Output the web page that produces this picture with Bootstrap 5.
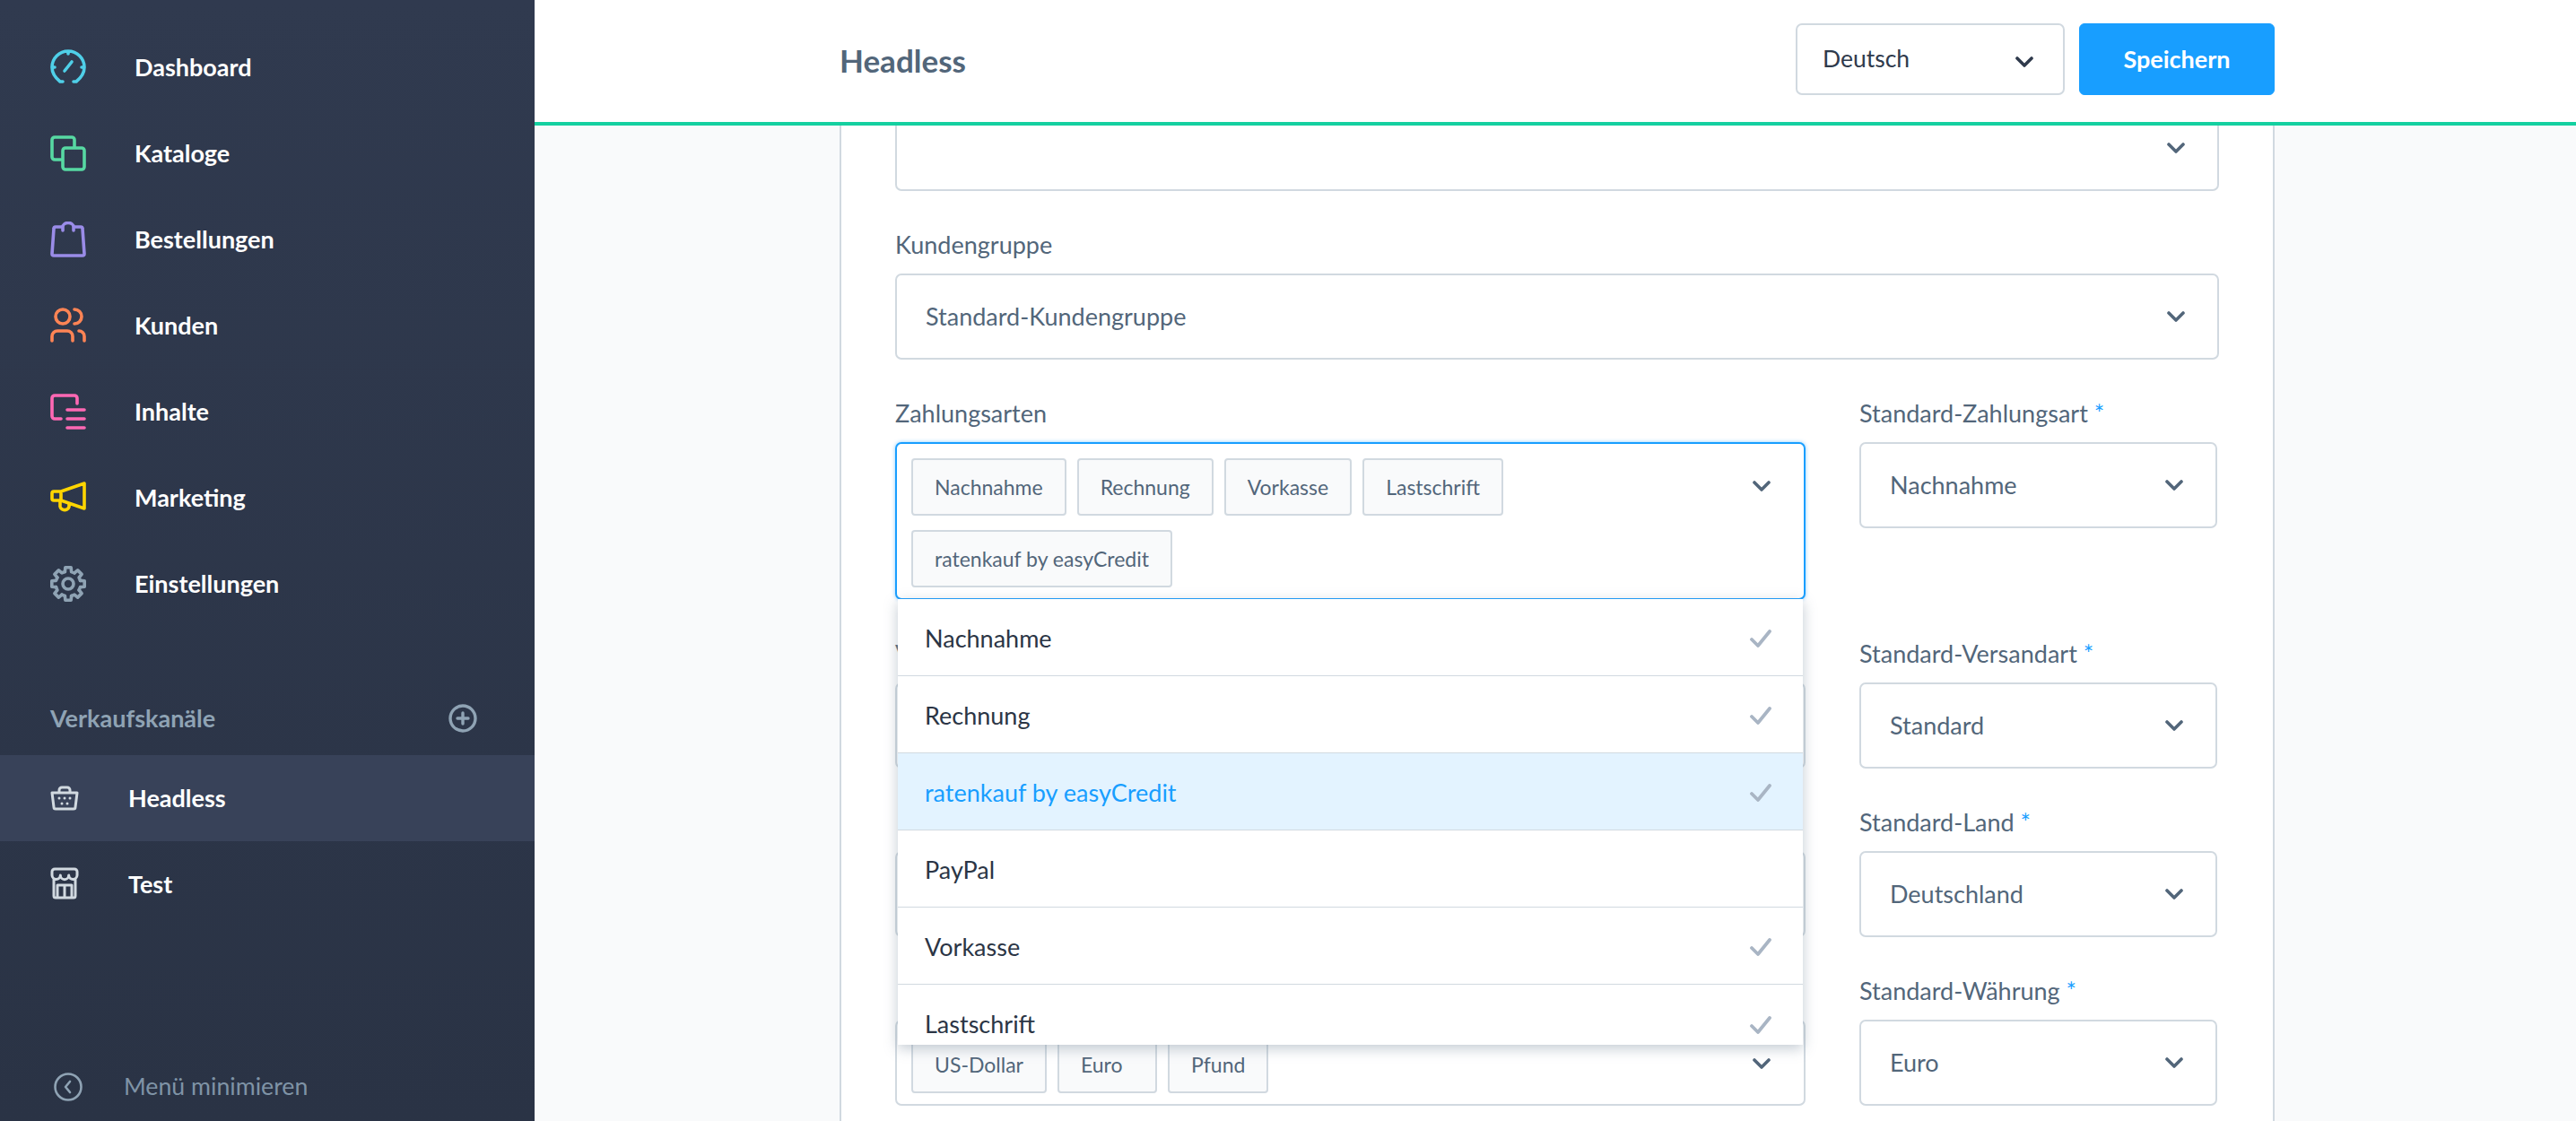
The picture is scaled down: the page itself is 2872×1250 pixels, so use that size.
<!DOCTYPE html>
<html lang="de">
<head>
<meta charset="utf-8">
<title>Headless</title>
<link href="https://cdn.jsdelivr.net/npm/bootstrap@5.3.0/dist/css/bootstrap.min.css" rel="stylesheet">
<style>
html,body{height:100%;}
body{font-family:Lato,"Noto Sans",sans-serif;font-size:28px;background:#f9fafb;color:#52667a;overflow:hidden;}
.app-shell{height:1250px;}
.side-bar{width:596px;flex:0 0 596px;height:1250px;background:linear-gradient(180deg,#303a4f,#2a3345);padding-top:27px;}
.side-link{height:96px;padding:0 0 0 56px;gap:54px;color:#fff;font-weight:700;font-size:27px;}
.side-link:hover,.side-link:focus{color:#fff;}
.side-link svg{flex:0 0 40px;width:40px;height:40px;fill:none;stroke-width:3.6;stroke-linecap:round;stroke-linejoin:round;}
.side-head{margin:82px 64px 21px 56px;height:40px;color:#8fa3b4;font-weight:700;font-size:27px;}
.side-head svg{width:32px;height:32px;fill:none;stroke:#8fa3b4;stroke-width:3.4;stroke-linecap:round;}
.chan-link{gap:55px;}
.chan-link svg{flex:0 0 32px;width:32px;height:40px;stroke:#d1d9e0;stroke-width:3;}
.chan-on{background:#384259;}
.side-foot{padding:0 0 7px 60px;gap:46px;color:#7f93a6;font-size:26.7px;height:70px;}
.side-foot svg{width:32px;height:32px;fill:none;stroke:#8fa3b4;stroke-width:2.6;stroke-linecap:round;stroke-linejoin:round;}
.main-area{min-width:0;}
.top-bar{height:140px;background:#fff;border-bottom:4px solid #14d0a0;position:relative;z-index:10;}
.page-wrap{width:1600px;margin-left:340px;}
.top-row{height:136px;padding-top:26px;}
.top-title{font-size:35px;font-weight:700;color:#52667a;margin:-28px 0 0;}
.lang-pick{width:300px;height:80px;padding:0 33px 0 28px;color:#2f3a4c;font-size:26.5px;border:2px solid #d1d9e0;border-radius:7px;}
.save-btn{width:218px;height:80px;background:#189eff;border-color:#189eff;font-size:27px;font-weight:700;border-radius:6px;}
.scroll-view{height:1110px;overflow:hidden;}
.form-panel{margin-top:-23px;padding:0 60px;background:#fff;border-left:2px solid #d1d9e0;border-right:2px solid #d1d9e0;}
.field-block{margin-bottom:40px;}
.field-gap{margin-bottom:120px;}
.field-label{display:block;font-size:27px;line-height:40px;margin-bottom:12px;color:#52667a;}
.label-under{padding-left:4px;}
.req-mark{color:#189eff;}
.pick-box{height:96px;border:2px solid #d1d9e0;border-radius:7px;background:#fff;padding:0 36px 0 32px;font-size:27px;color:#52667a;}
.pick-box svg,.lang-pick svg{flex:0 0 auto;width:20px;height:12px;fill:none;stroke:#52667a;stroke-width:3.6;stroke-linecap:round;stroke-linejoin:round;}
.lang-pick svg{stroke:#2f3a4c;margin-top:6px;}
.multi-box{height:auto;padding:16px 37px 14px 16px;align-items:flex-start!important;}
.multi-box svg{margin-top:25px;}
.multi-focus{height:176px;border-color:#189eff;box-shadow:0 0 4px rgba(24,158,255,.5);}
.multi-low{height:96px;}
.chip-list{max-width:900px;gap:16px 12px;}
.pay-chip{height:64px;min-width:111px;padding:0 24px;border:2px solid #d1d9e0;border-radius:4px;background:#f9fafb;font-size:23px;color:#52667a;}
.left-col{width:1015px;flex:0 0 1015px;}
.right-col{width:399px;flex:0 0 399px;}
.col-gap{gap:60px;}
.pick-menu{position:absolute;left:3px;right:3px;top:175px;height:497px;overflow:hidden;z-index:5;background:#fff;box-shadow:0 4px 14px rgba(120,138,155,.45);}
.menu-row{height:86px;padding:3px 34px 0 30px;border:0;border-bottom:2px solid #d1d9e0;font-size:27px;color:#2b3545;border-radius:0!important;}
.menu-row svg{width:26px;height:20px;fill:none;stroke:#a9b5c4;stroke-width:3.8;stroke-linecap:round;stroke-linejoin:round;}
.menu-row.row-hot{background:#e3f3ff;color:#189eff;}
</style>
</head>
<body>
<svg width="0" height="0" class="position-absolute"><defs>
<path id="gear-seg" d="M-3.6-13.5L-3.2-18.2L3.2-18.2L3.6-13.5L7-12.1"/>
<polyline id="chev" points="2,2 10,10 18,2"/>
</defs></svg>
<div class="app-shell d-flex">
<aside class="side-bar d-flex flex-column">
  <nav class="nav flex-column">
    <a class="nav-link side-link d-flex align-items-center" href="#"><svg viewBox="0 0 40 40" stroke="#4fcfe8"><path d="M14 36H11C6 32 2 27 2 20A18 18 0 0 1 38 20C38 27 34 32 29 36H26M20 2V5M2 20H5M35 20H38M16 24L24 14"/></svg>Dashboard</a>
    <a class="nav-link side-link d-flex align-items-center" href="#"><svg viewBox="0 0 40 40" stroke="#57d9a3"><path d="M12 27H5A3 3 0 0 1 2 24V5A3 3 0 0 1 5 2H24A3 3 0 0 1 27 5V13"/><rect x="14" y="14" width="24" height="24" rx="3"/></svg>Kataloge</a>
    <a class="nav-link side-link d-flex align-items-center" href="#"><svg viewBox="0 0 40 40" stroke="#9a8ce8"><path d="M14 10V6A6 4.500 0 0 1 26 6V10M26 6H34A2 2 0 0 1 36 8L38 36A2 2 0 0 1 36 38H4A2 2 0 0 1 2 36L4 8A2 2 0 0 1 6 6H14"/></svg>Bestellungen</a>
    <a class="nav-link side-link d-flex align-items-center" href="#"><svg viewBox="0 0 40 40" stroke="#ff8455"><circle cx="14" cy="10" r="8"/><path d="M27 2A8 8 0 0 1 27 18M2 37V32A6 6 0 0 1 8 26H19A6 6 0 0 1 25 32V37M32 26A6 6 0 0 1 38 32V37"/></svg>Kunden</a>
    <a class="nav-link side-link d-flex align-items-center" href="#"><svg viewBox="0 0 40 40" stroke="#ff68b4"><path d="M30 11V5A3 3 0 0 0 27 2H5A3 3 0 0 0 2 5V25A3 3 0 0 0 5 28H12M19 18H38M19 28H38M19 38H38"/></svg>Inhalte</a>
    <a class="nav-link side-link d-flex align-items-center" href="#"><svg viewBox="0 0 40 40" stroke="#ffd500"><path d="M12 13L38 4V32L12 23ZM12 13H4A2 2 0 0 0 2 15V21A2 2 0 0 0 4 23H12M11 23V28A5 4.500 0 0 0 21 30L21 27"/></svg>Marketing</a>
    <a class="nav-link side-link d-flex align-items-center" href="#"><svg viewBox="0 0 40 40" stroke="#8fa3b4"><g transform="translate(20 20)"><use href="#gear-seg"/><use href="#gear-seg" transform="rotate(45)"/><use href="#gear-seg" transform="rotate(90)"/><use href="#gear-seg" transform="rotate(135)"/><use href="#gear-seg" transform="rotate(180)"/><use href="#gear-seg" transform="rotate(225)"/><use href="#gear-seg" transform="rotate(270)"/><use href="#gear-seg" transform="rotate(315)"/></g><circle cx="20" cy="20" r="6"/></svg>Einstellungen</a>
  </nav>
  <div class="side-head d-flex align-items-center justify-content-between"><span>Verkaufskanäle</span><svg viewBox="0 0 32 32"><circle cx="16" cy="16" r="14"/><path d="M16 10V22M10 16H22"/></svg></div>
  <nav class="nav flex-column">
    <a class="nav-link side-link chan-link chan-on d-flex align-items-center" href="#"><svg viewBox="0 0 32 40"><path d="M10 14V11A3 3 0 0 1 13 8H19A3 3 0 0 1 22 11V14M2 14H30L28 30A2 2 0 0 1 26 32H6A2 2 0 0 1 4 30ZM10 20V20.100M16 20V20.100M22 20V20.100M13 26V26.100M19 26V26.100"/></svg>Headless</a>
    <a class="nav-link side-link chan-link d-flex align-items-center" href="#"><svg viewBox="0 0 32 40"><path d="M2 10V6A3 3 0 0 1 5 3H27A3 3 0 0 1 30 6V10A4.670 4.670 0 0 1 20.670 10A4.670 4.670 0 0 1 11.330 10A4.670 4.670 0 0 1 2 10ZM4 15V33A2 2 0 0 0 6 35H26A2 2 0 0 0 28 33V15M8 35V21H24V35M16 21V35"/></svg>Test</a>
  </nav>
  <a class="nav-link side-foot d-flex align-items-center mt-auto" href="#"><svg viewBox="0 0 32 32"><circle cx="16" cy="16" r="14.500"/><path d="M18 10L13 16L18 22"/></svg>Menü minimieren</a>
</aside>
<main class="main-area flex-grow-1">
  <header class="top-bar">
    <div class="page-wrap top-row d-flex align-items-start justify-content-between">
      <h1 class="top-title align-self-center">Headless</h1>
      <div class="d-flex gap-3">
        <div class="form-control lang-pick d-flex align-items-center justify-content-between"><span>Deutsch</span><svg viewBox="0 0 20 12"><use href="#chev"/></svg></div>
        <button type="button" class="btn btn-primary save-btn">Speichern</button>
      </div>
    </div>
  </header>
  <div class="scroll-view">
    <div class="page-wrap">
      <div class="form-panel">
        <div class="field-block">
          <div class="pick-box d-flex align-items-center justify-content-between"><span></span><svg viewBox="0 0 20 12"><use href="#chev"/></svg></div>
        </div>
        <div class="field-block">
          <label class="field-label">Kundengruppe</label>
          <div class="pick-box d-flex align-items-center justify-content-between"><span>Standard-Kundengruppe</span><svg viewBox="0 0 20 12"><use href="#chev"/></svg></div>
        </div>
        <div class="d-flex col-gap">
          <div class="left-col">
            <div class="field-block">
              <label class="field-label">Zahlungsarten</label>
              <div class="position-relative">
                <div class="pick-box multi-box multi-focus d-flex justify-content-between">
                  <div class="chip-list d-flex flex-wrap">
                    <span class="pay-chip d-flex align-items-center">Nachnahme</span>
                    <span class="pay-chip d-flex align-items-center">Rechnung</span>
                    <span class="pay-chip d-flex align-items-center">Vorkasse</span>
                    <span class="pay-chip d-flex align-items-center">Lastschrift</span>
                    <span class="pay-chip d-flex align-items-center">ratenkauf by easyCredit</span>
                  </div>
                  <svg viewBox="0 0 20 12"><use href="#chev"/></svg>
                </div>
                <div class="list-group list-group-flush pick-menu">
                  <div class="list-group-item menu-row d-flex align-items-center justify-content-between flex-shrink-0"><span>Nachnahme</span><svg viewBox="0 0 26 20"><path d="M3 11L10 18L23 2"/></svg></div>
                  <div class="list-group-item menu-row d-flex align-items-center justify-content-between flex-shrink-0"><span>Rechnung</span><svg viewBox="0 0 26 20"><path d="M3 11L10 18L23 2"/></svg></div>
                  <div class="list-group-item menu-row row-hot d-flex align-items-center justify-content-between flex-shrink-0"><span>ratenkauf by easyCredit</span><svg viewBox="0 0 26 20"><path d="M3 11L10 18L23 2"/></svg></div>
                  <div class="list-group-item menu-row d-flex align-items-center justify-content-between flex-shrink-0"><span>PayPal</span></div>
                  <div class="list-group-item menu-row d-flex align-items-center justify-content-between flex-shrink-0"><span>Vorkasse</span><svg viewBox="0 0 26 20"><path d="M3 11L10 18L23 2"/></svg></div>
                  <div class="list-group-item menu-row d-flex align-items-center justify-content-between flex-shrink-0"><span>Lastschrift</span><svg viewBox="0 0 26 20"><path d="M3 11L10 18L23 2"/></svg></div>
                </div>
              </div>
            </div>
            <div class="field-block">
              <label class="field-label">Versandarten</label>
              <div class="pick-box"></div>
            </div>
            <div class="field-block">
              <label class="field-label label-under">Länder</label>
              <div class="pick-box"></div>
            </div>
            <div class="field-block">
              <label class="field-label label-under">Währungen</label>
              <div class="pick-box multi-box multi-low d-flex justify-content-between">
                <div class="chip-list d-flex flex-wrap">
                  <span class="pay-chip d-flex align-items-center">US-Dollar</span>
                  <span class="pay-chip d-flex align-items-center">Euro</span>
                  <span class="pay-chip d-flex align-items-center">Pfund</span>
                </div>
                <svg viewBox="0 0 20 12"><use href="#chev"/></svg>
              </div>
            </div>
          </div>
          <div class="right-col">
            <div class="field-block field-gap">
              <label class="field-label">Standard-Zahlungsart <span class="req-mark">*</span></label>
              <div class="pick-box d-flex align-items-center justify-content-between"><span>Nachnahme</span><svg viewBox="0 0 20 12"><use href="#chev"/></svg></div>
            </div>
            <div class="field-block">
              <label class="field-label">Standard-Versandart <span class="req-mark">*</span></label>
              <div class="pick-box d-flex align-items-center justify-content-between"><span>Standard</span><svg viewBox="0 0 20 12"><use href="#chev"/></svg></div>
            </div>
            <div class="field-block">
              <label class="field-label">Standard-Land <span class="req-mark">*</span></label>
              <div class="pick-box d-flex align-items-center justify-content-between"><span>Deutschland</span><svg viewBox="0 0 20 12"><use href="#chev"/></svg></div>
            </div>
            <div class="field-block">
              <label class="field-label">Standard-Währung <span class="req-mark">*</span></label>
              <div class="pick-box d-flex align-items-center justify-content-between"><span>Euro</span><svg viewBox="0 0 20 12"><use href="#chev"/></svg></div>
            </div>
          </div>
        </div>
      </div>
    </div>
  </div>
</main>
</div>
<script src="https://cdn.jsdelivr.net/npm/bootstrap@5.3.0/dist/js/bootstrap.bundle.min.js"></script>
</body>
</html>
